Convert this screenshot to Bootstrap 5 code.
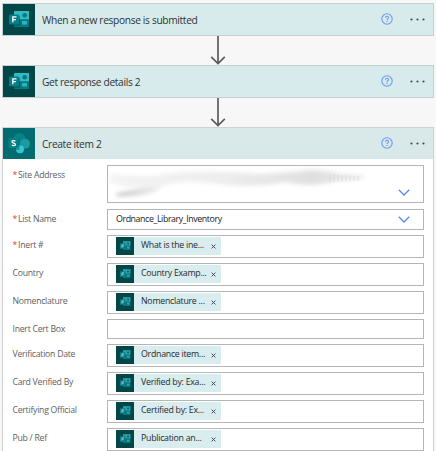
<!DOCTYPE html>
<html lang="en">
<head>
<meta charset="utf-8">
<meta name="viewport" content="width=device-width, initial-scale=1">
<title>Flow designer</title>
<link href="https://cdn.jsdelivr.net/npm/bootstrap@5.3.0/dist/css/bootstrap.min.css" rel="stylesheet">
<style>
body{background:#f7f7f7;font-family:"Open Sans","Noto Sans",sans-serif;width:436px;height:451px;overflow:hidden;color:#333}
.flow{padding:3px 2px 0 2px}
.step{height:33px;background:#d8ebec;border:1px solid #c8d0cf;width:432px}
.step-title{font-size:10.2px;letter-spacing:-.34px;line-height:14px;color:#2d3336;margin-left:7px;white-space:nowrap}
.tile{width:32px;height:31px;background:#034648}
.tile-sp{background:#036c70}
.tile svg,.chip-icon svg{display:block}
.help{width:12px;height:12px;margin-right:17px;margin-bottom:2px}
.dots{width:15px;height:3px;margin-right:8px;margin-bottom:1px}
.link-arrow{height:29px}
.action{width:432px;height:340px;background:#fff;border:1px solid #d2d2d2}
.action-head{background:#d9e8e8;height:31px}
.fields{padding-top:6px;gap:5px}
.field{padding-left:9.5px}
.field-site{margin-bottom:1px}
.field-label{width:94.5px;font-size:8.7px;letter-spacing:-.26px;line-height:12px;color:#606060;padding-top:3.5px;white-space:nowrap}
.req{color:#e03c4c;margin-right:1px}
.box{width:317px;height:23px;border:1px solid #b5b5b5;background:#fff;padding-left:8px}
.h-20{height:20px}
.h-21{height:21px}
.h-site{height:38px}
.chip{width:105px;height:18px;background:#d9ecee;margin-top:1px}
.chip-icon{width:18px;height:18px;background:#034648}
.chip-text{width:70px;margin-left:7px;font-size:8.8px;letter-spacing:-.27px;line-height:17px;height:18px;color:#262b2e;white-space:nowrap}
.chip-x{width:5px;height:5px}
.value{font-size:8.8px;letter-spacing:-.4px;color:#222;line-height:19px}
.chev{width:12px;height:7px;margin-right:13px}
.chev-low{margin-bottom:6px}
</style>
<script src="https://cdn.jsdelivr.net/npm/bootstrap@5.3.0/dist/js/bootstrap.bundle.min.js" defer></script>
</head>
<body>
<svg width="0" height="0" class="position-absolute" aria-hidden="true">
  <defs>
    <symbol id="forms" viewBox="0 0 32 31">
      <rect x="11" y="7" width="15" height="16" rx="1" fill="#087d84"/>
      <rect x="11" y="7" width="15" height="8.5" rx=".8" fill="#30bac5"/>
      <circle cx="21.7" cy="11.3" r="2.3" fill="#087880"/>
      <path d="M11 15.5h15v6a1 1 0 0 1-1 1H12a1 1 0 0 1-1-1z" fill="#06777e"/>
      <rect x="19" y="17" width="5" height="3.6" fill="#27b4bf"/>
      <rect x="7" y="11.5" width="10" height="10" rx="1" fill="#022f31" opacity=".45"/>
      <rect x="6" y="10.5" width="10" height="10" rx="1" fill="#087e86"/>
      <path d="M9.8 18.3v-5.4h3.7M9.8 15.6h3.2" stroke="#fff" stroke-width="1.3" fill="none"/>
    </symbol>
    <symbol id="sharepoint" viewBox="0 0 32 31">
      <circle cx="16.5" cy="11" r="6" fill="#078288"/>
      <circle cx="22" cy="15.8" r="5" fill="#1a9ba1"/>
      <circle cx="17" cy="21.3" r="4" fill="#37c6d0"/>
      <path d="M7 10.5h9.5v11.5H13z" fill="#024a4d" opacity=".4"/>
      <rect x="5.5" y="10" width="10" height="10" rx="1" fill="#068187"/>
      <path d="M12.4 13.2C11.2 12.3 9 12.5 9 13.8c0 1.6 3.4 1 3.4 2.6 0 1.5-2.4 1.6-3.6.7" stroke="#fff" stroke-width="1.3" fill="none"/>
    </symbol>
    <symbol id="q" viewBox="0 0 12 12">
      <circle cx="6" cy="6" r="5.2" fill="none" stroke="#6b98f5" stroke-width="1.1"/>
      <path d="M4.5 4.8C4.5 2.7 7.6 2.8 7.5 4.7 7.4 5.8 6 5.8 6 7.2M6 8.1v1" fill="none" stroke="#6b98f5" stroke-width="1.1"/>
    </symbol>
    <symbol id="dots" viewBox="0 0 15 3"><g fill="#444b4d"><circle cx="1.5" cy="1.5" r="1.1"/><circle cx="7.5" cy="1.5" r="1.1"/><circle cx="13.5" cy="1.5" r="1.1"/></g></symbol>
    <symbol id="arrow" viewBox="0 0 16 29"><path d="M8 0v27.5M1.2 20.8 8 27.6l6.8-6.8" fill="none" stroke="#5c5c5c" stroke-width="1.7"/></symbol>
    <symbol id="x" viewBox="0 0 5 5"><path d="M.6.6l3.8 3.8M4.4.6.6 4.4" stroke="#3d4a63" stroke-width="1"/></symbol>
    <symbol id="chev" viewBox="0 0 12 7"><path d="M.8.8 6 6 11.2.8" fill="none" stroke="#5b88ef" stroke-width="1.3"/></symbol>
    <symbol id="mini" viewBox="0 0 18 18">
      <rect x="7" y="4.2" width="7.5" height="4.6" fill="#26a3ad"/>
      <circle cx="12" cy="6.5" r="1.1" fill="#06686e"/>
      <rect x="7" y="8.8" width="7.5" height="4.2" fill="#06777e"/>
      <rect x="11" y="9.7" width="2.4" height="1.8" fill="#27aab4"/>
      <rect x="4" y="6.3" width="5.3" height="5.5" fill="#087e86"/>
      <path d="M6 10.7V7.8h2M6 9.2h1.7" stroke="#a9d5d7" stroke-width=".8" fill="none"/>
    </symbol>
    <filter id="soft" x="-10%" y="-60%" width="120%" height="220%"><feGaussianBlur stdDeviation="2.3"/></filter>
    <linearGradient id="smear"><stop offset="0" stop-color="#f4f4f4"/><stop offset=".45" stop-color="#ededed"/><stop offset=".8" stop-color="#dfdfdf"/><stop offset="1" stop-color="#eee"/></linearGradient>
    <linearGradient id="smear-low"><stop offset="0" stop-color="#c4c4c4"/><stop offset="1" stop-color="#f0f0f0"/></linearGradient>
  </defs>
</svg>
<main class="flow d-flex flex-column">
  <div class="step d-flex align-items-center">
    <div class="tile"><svg width="32" height="31"><use href="#forms"/></svg></div>
    <span class="step-title">When a new response is submitted</span>
    <svg class="help ms-auto"><use href="#q"/></svg><svg class="dots"><use href="#dots"/></svg>
  </div>
  <div class="link-arrow d-flex justify-content-center"><svg width="16" height="29"><use href="#arrow"/></svg></div>
  <div class="step d-flex align-items-center">
    <div class="tile"><svg width="32" height="31"><use href="#forms"/></svg></div>
    <span class="step-title">Get response details 2</span>
    <svg class="help ms-auto"><use href="#q"/></svg><svg class="dots"><use href="#dots"/></svg>
  </div>
  <div class="link-arrow d-flex justify-content-center"><svg width="16" height="29"><use href="#arrow"/></svg></div>
  <section class="action">
    <div class="action-head d-flex align-items-center">
      <div class="tile tile-sp"><svg width="32" height="31"><use href="#sharepoint"/></svg></div>
      <span class="step-title">Create item 2</span>
      <svg class="help ms-auto"><use href="#q"/></svg><svg class="dots"><use href="#dots"/></svg>
    </div>
    <div class="fields d-flex flex-column">
      <div class="field field-site d-flex"><div class="field-label"><span class="req">*</span>Site Address</div>
        <div class="box h-site d-flex ps-0">
          <svg width="268" height="35"><g filter="url(#soft)"><path d="M2 8C20 8 30 12 50 9 80 4 120 5 150 8q28-1 50-4 18 0 34 4l22 1v4l-28 2q-26 7-50 1-40 7-76 1-30-4-50 4Q20 24 2 17z" fill="url(#smear)"/><path d="M8 28q14-5 46-7l-8 5q-18 5-38 4z" fill="url(#smear-low)"/></g><path d="M222 8.5v8M226 8.5v8M230 9v7M234 9v7M238 9v6.5M242 9.5v6M246 10v5M250 10v5" stroke="#cfcfcf" stroke-width="1.2" opacity=".5"/></svg>
          <svg class="chev chev-low ms-auto mt-auto"><use href="#chev"/></svg>
        </div></div>
      <div class="field d-flex"><div class="field-label"><span class="req">*</span>List Name</div>
        <div class="box h-21 d-flex align-items-center"><span class="value">Ordnance_Library_Inventory</span><svg class="chev ms-auto"><use href="#chev"/></svg></div></div>
      <div class="field d-flex"><div class="field-label"><span class="req">*</span>Inert #</div>
        <div class="box"><div class="chip d-flex align-items-center"><div class="chip-icon"><svg width="18" height="18"><use href="#mini"/></svg></div><span class="chip-text">What is the ine...</span><svg class="chip-x"><use href="#x"/></svg></div></div></div>
      <div class="field d-flex"><div class="field-label">Country</div>
        <div class="box"><div class="chip d-flex align-items-center"><div class="chip-icon"><svg width="18" height="18"><use href="#mini"/></svg></div><span class="chip-text">Country Examp...</span><svg class="chip-x"><use href="#x"/></svg></div></div></div>
      <div class="field d-flex"><div class="field-label">Nomenclature</div>
        <div class="box"><div class="chip d-flex align-items-center"><div class="chip-icon"><svg width="18" height="18"><use href="#mini"/></svg></div><span class="chip-text">Nomenclature ...</span><svg class="chip-x"><use href="#x"/></svg></div></div></div>
      <div class="field d-flex"><div class="field-label">Inert Cert Box</div>
        <div class="box h-20"></div></div>
      <div class="field d-flex"><div class="field-label">Verification Date</div>
        <div class="box"><div class="chip d-flex align-items-center"><div class="chip-icon"><svg width="18" height="18"><use href="#mini"/></svg></div><span class="chip-text">Ordnance item...</span><svg class="chip-x"><use href="#x"/></svg></div></div></div>
      <div class="field d-flex"><div class="field-label">Card Verified By</div>
        <div class="box"><div class="chip d-flex align-items-center"><div class="chip-icon"><svg width="18" height="18"><use href="#mini"/></svg></div><span class="chip-text">Verified by: Exa...</span><svg class="chip-x"><use href="#x"/></svg></div></div></div>
      <div class="field d-flex"><div class="field-label">Certifying Official</div>
        <div class="box"><div class="chip d-flex align-items-center"><div class="chip-icon"><svg width="18" height="18"><use href="#mini"/></svg></div><span class="chip-text">Certified by: Ex...</span><svg class="chip-x"><use href="#x"/></svg></div></div></div>
      <div class="field d-flex"><div class="field-label">Pub / Ref</div>
        <div class="box"><div class="chip d-flex align-items-center"><div class="chip-icon"><svg width="18" height="18"><use href="#mini"/></svg></div><span class="chip-text">Publication an...</span><svg class="chip-x"><use href="#x"/></svg></div></div></div>
    </div>
  </section>
</main>
</body>
</html>
